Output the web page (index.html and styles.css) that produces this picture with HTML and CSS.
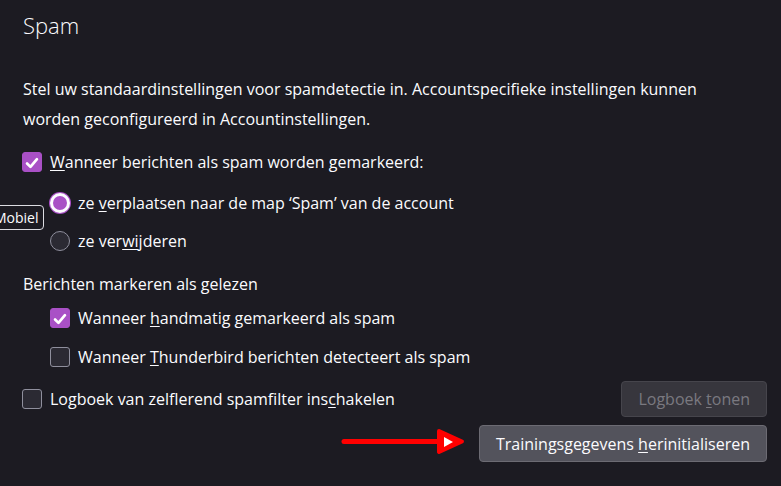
FILE: index.html
```html
<!DOCTYPE html>
<html lang="nl">
<head>
<meta charset="utf-8">
<title>Spam</title>
<link rel="stylesheet" href="styles.css">
</head>
<body>
<div class="page">
  <h1 class="title">Spam</h1>
  <p class="desc">Stel uw standaardinstellingen voor spamdetectie in. Accountspecifieke instellingen kunnen worden geconfigureerd in Accountinstellingen.</p>

  <div class="row r-move">
    <span class="cb checked"><svg viewBox="0 0 20 20" width="20" height="20"><path d="M4.5 10.5 L8.3 14.3 L15.5 5.8" fill="none" stroke="#fff" stroke-width="3" stroke-linecap="round" stroke-linejoin="round"/></svg></span>
    <span class="label"><u>W</u>anneer berichten als spam worden gemarkeerd:</span>
  </div>

  <div class="indent">
    <div class="row r-radio1">
      <span class="radio selected"></span>
      <span class="label">ze <u>v</u>erplaatsen naar de map ‘Spam’ van de account</span>
    </div>
    <div class="row r-radio2">
      <span class="radio"></span>
      <span class="label">ze ver<u>wi</u>jderen</span>
    </div>
  </div>

  <div class="sub">Berichten markeren als gelezen</div>

  <div class="indent">
    <div class="row r-cb2">
      <span class="cb checked"><svg viewBox="0 0 20 20" width="20" height="20"><path d="M4.5 10.5 L8.3 14.3 L15.5 5.8" fill="none" stroke="#fff" stroke-width="3" stroke-linecap="round" stroke-linejoin="round"/></svg></span>
      <span class="label">Wanneer <u>h</u>andmatig gemarkeerd als spam</span>
    </div>
    <div class="row r-cb3">
      <span class="cb"></span>
      <span class="label">Wanneer <u>T</u>hunderbird berichten detecteert als spam</span>
    </div>
  </div>

  <div class="logrow">
    <div class="row">
      <span class="cb"></span>
      <span class="label">Logboek van zelflerend spamfilter ins<u>c</u>hakelen</span>
    </div>
    <button class="btn disabled" disabled>Logboek <u>t</u>onen</button>
  </div>

  <div class="trainrow">
    <svg class="arrow" viewBox="0 0 125 28" width="125" height="28">
      <line x1="4" y1="13.5" x2="100" y2="13.5" stroke="#ff0000" stroke-width="5" stroke-linecap="round"/>
      <polygon points="99,3 122,13.5 99,24" fill="#ff0000" stroke="#ff0000" stroke-width="4" stroke-linejoin="round"/>
      <polygon points="104,9 113,14 104,19" fill="#ffffff"/>
    </svg>
    <button class="btn">Trainingsgegevens <u>h</u>erinitialiseren</button>
  </div>

  <div class="tooltip">Mobiel</div>
</div>
</body>
</html>
```

FILE: styles.css
```css
html, body {
  margin: 0;
  padding: 0;
  background: #1c1b22;
}
body {
  width: 781px;
  height: 486px;
  overflow: hidden;
  color: #fbfbfe;
  font-family: "Open Sans", "Noto Sans", sans-serif;
  font-size: 16px;
}
.page {
  position: relative;
  padding: 10px 14px 0 23px;
}
.title {
  margin: 0;
  font-size: 22px;
  font-weight: 300;
  line-height: 30px;
}
.desc {
  margin: 34px 0 0 0;
  max-width: 715px;
  line-height: 30px;
}
.row {
  display: flex;
  align-items: center;
  height: 30px;
}
.label {
  margin-left: 8px;
  white-space: nowrap;
}
u {
  text-decoration: underline;
  text-underline-offset: 2px;
}
.r-move { margin-top: 13px; margin-left: -1px; }
.indent { padding-left: 27px; }
.r-radio1 { margin-top: 11px; }
.r-radio2 { margin-top: 8px; }
.sub { margin-top: 13px; line-height: 30px; }
.r-cb2 { margin-top: 4px; }
.r-cb3 { margin-top: 9px; }
.cb {
  box-sizing: border-box;
  width: 20px;
  height: 20px;
  border-radius: 3px;
  border: 1px solid #8f8f9d;
  background: #2b2a33;
  flex: none;
  display: flex;
}
.cb.checked {
  border-color: #a950c6;
  background: #a950c6;
}
.radio {
  box-sizing: border-box;
  width: 20px;
  height: 20px;
  border-radius: 50%;
  border: 1px solid #8f8f9d;
  background: #2b2a33;
  flex: none;
}
.radio.selected {
  border: 3px solid #fbfbfe;
  background: #a950c6;
  box-shadow: 0 0 0 1px #a950c6;
}
.logrow {
  display: flex;
  justify-content: space-between;
  align-items: center;
  margin-top: 9px;
  height: 36px;
  margin-left: -1px;
}
.trainrow {
  display: flex;
  justify-content: flex-end;
  align-items: center;
  margin-top: 8px;
  gap: 14px;
}
.arrow { flex: none; margin-top: -4px; }
.btn {
  box-sizing: border-box;
  height: 36px;
  border-radius: 4px;
  font-family: inherit;
  font-size: 16px;
  padding: 0 16px;
  color: #fbfbfe;
  background: #53535c;
  border: 1px solid #6c6b73;
}
.trainrow .btn { height: 37px; }
.btn.disabled {
  background: #37363d;
  border-color: #46454c;
  color: #7a7980;
}
.tooltip {
  position: absolute;
  left: -12px;
  top: 205px;
  width: 56px;
  height: 25px;
  box-sizing: border-box;
  border: 1px solid #dcdce2;
  border-radius: 4px;
  background: #1c1b22;
  font-size: 14px;
  line-height: 23px;
  padding-left: 5px;
  overflow: hidden;
  white-space: nowrap;
}
```
